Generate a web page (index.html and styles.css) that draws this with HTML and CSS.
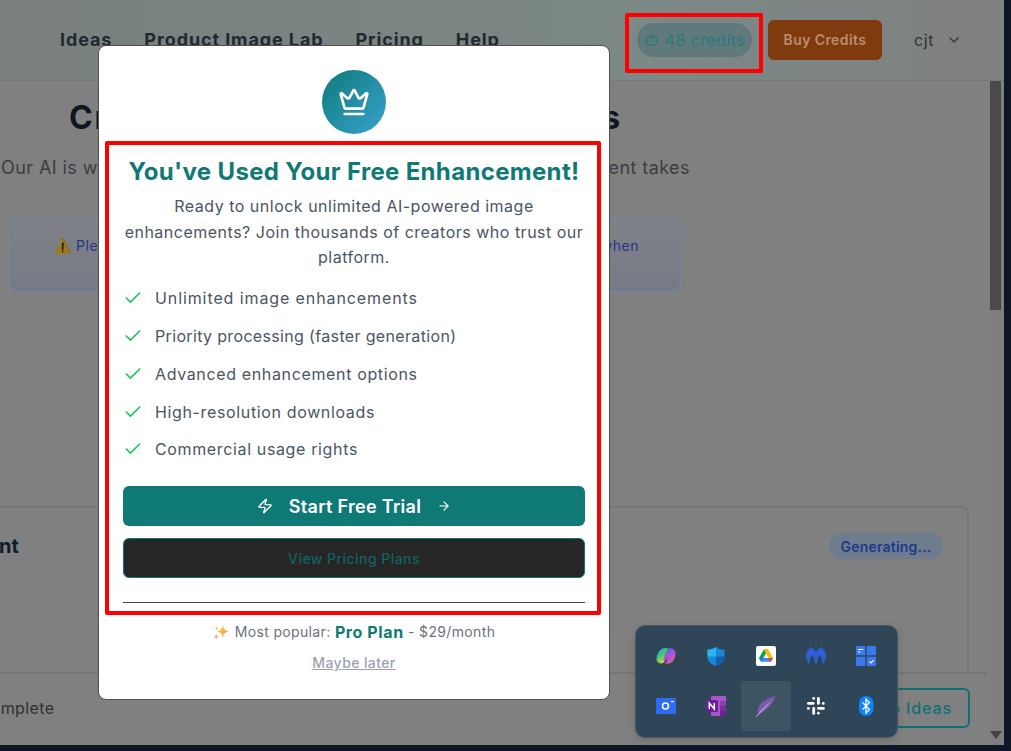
FILE: index.html
```html
<!DOCTYPE html>
<html lang="en">
<head>
<meta charset="utf-8">
<title>You've Used Your Free Enhancement</title>
<link rel="stylesheet" href="styles.css">
</head>
<body>
<div class="window">
  <header class="topbar">
    <nav class="nav">
      <a class="nav-link">Ideas</a>
      <a class="nav-link">Product Image Lab</a>
      <a class="nav-link">Pricing</a>
      <a class="nav-link">Help</a>
    </nav>
    <div class="account">
      <span class="credits">
        <svg class="credits-icon" viewBox="0 0 24 24" fill="none" stroke="currentColor" stroke-width="2" stroke-linecap="round" stroke-linejoin="round"><path d="M12 8V4H9"/><rect x="4" y="8" width="16" height="12" rx="2"/><path d="M2 14h2M20 14h2M9 13v2M15 13v2"/></svg>
        48 credits
      </span>
      <button class="buy">Buy Credits</button>
      <span class="user">cjt</span>
      <svg class="chevron" viewBox="0 0 24 24" fill="none" stroke="currentColor" stroke-width="2" stroke-linecap="round" stroke-linejoin="round"><path d="m6 9 6 6 6-6"/></svg>
    </div>
  </header>
  <div class="page">
    <main class="main">
      <h1 class="headline">Creating Your Enhanced Images</h1>
      <p class="lead">Our AI is working its magic on your product images. Each enhancement takes</p>
      <div class="notice"><span class="notice-text"><span class="warn">⚠️</span> Please keep this page open while we work. We'll let you know right away when</span></div>
      <section class="card">
        <h2 class="card-title">Enhancement</h2>
        <span class="chip">Generating...</span>
      </section>
      <footer class="footer">
        <span class="status">Generation complete</span>
        <button class="back">Back to Ideas</button>
      </footer>
    </main>
    <div class="scrollbar">
      <div class="thumb"></div>
      <div class="arrow"></div>
    </div>
  </div>

  <div class="modal-layer">
    <div class="modal">
      <div class="badge">
        <svg viewBox="0 0 24 24" fill="none" stroke="#fff" stroke-width="2" stroke-linecap="round" stroke-linejoin="round"><path d="M11.562 3.266a.5.5 0 0 1 .876 0L15.39 8.87a1 1 0 0 0 1.516.294L21.183 5.5a.5.5 0 0 1 .798.519l-2.834 10.246a1 1 0 0 1-.956.734H5.81a1 1 0 0 1-.957-.734L2.02 6.02a.5.5 0 0 1 .798-.519l4.276 3.664a1 1 0 0 0 1.516-.294z"/><path d="M5 21h14"/></svg>
      </div>
      <h2 class="modal-title">You've Used Your Free Enhancement!</h2>
      <p class="modal-copy">Ready to unlock unlimited AI-powered image enhancements? Join thousands of creators who trust our platform.</p>
      <ul class="features">
        <li class="feature feature-wide"><svg class="check" viewBox="0 0 24 24" fill="none" stroke="#22c55e" stroke-width="2" stroke-linecap="round" stroke-linejoin="round"><path d="M20 6 9 17l-5-5"/></svg>Unlimited image enhancements</li>
        <li class="feature feature-tight"><svg class="check" viewBox="0 0 24 24" fill="none" stroke="#22c55e" stroke-width="2" stroke-linecap="round" stroke-linejoin="round"><path d="M20 6 9 17l-5-5"/></svg>Priority processing (faster generation)</li>
        <li class="feature"><svg class="check" viewBox="0 0 24 24" fill="none" stroke="#22c55e" stroke-width="2" stroke-linecap="round" stroke-linejoin="round"><path d="M20 6 9 17l-5-5"/></svg>Advanced enhancement options</li>
        <li class="feature"><svg class="check" viewBox="0 0 24 24" fill="none" stroke="#22c55e" stroke-width="2" stroke-linecap="round" stroke-linejoin="round"><path d="M20 6 9 17l-5-5"/></svg>High-resolution downloads</li>
        <li class="feature"><svg class="check" viewBox="0 0 24 24" fill="none" stroke="#22c55e" stroke-width="2" stroke-linecap="round" stroke-linejoin="round"><path d="M20 6 9 17l-5-5"/></svg>Commercial usage rights</li>
      </ul>
      <button class="cta">
        <svg class="cta-icon" viewBox="0 0 24 24" fill="none" stroke="currentColor" stroke-width="2" stroke-linecap="round" stroke-linejoin="round"><path d="M4 14a1 1 0 0 1-.78-1.630l9.900-10.200a.5.5 0 0 1 .860.460l-1.920 6.020A1 1 0 0 0 13 10h7a1 1 0 0 1 .780 1.630l-9.900 10.200a.5.5 0 0 1-.860-.460l1.920-6.020A1 1 0 0 0 11 14z"/></svg>
        <span>Start Free Trial</span>
        <svg class="cta-arrow" viewBox="0 0 24 24" fill="none" stroke="currentColor" stroke-width="2" stroke-linecap="round" stroke-linejoin="round"><path d="M5 12h14M12 5l7 7-7 7"/></svg>
      </button>
      <button class="secondary">View Pricing Plans</button>
      <hr class="divider">
      <p class="popular"><svg class="sparkle" viewBox="0 0 16 16"><defs><linearGradient id="spk" x1="0" y1="0" x2="1" y2="1"><stop offset="0" stop-color="#fcd34d"/><stop offset="1" stop-color="#fb923c"/></linearGradient></defs><path d="M9.800 1c.5 3.700 1.800 5.300 6.200 6.300-4.400 1-5.700 2.600-6.200 6.700-.5-4.100-1.800-5.700-6.200-6.700 4.400-1 5.700-2.600 6.200-6.300z" fill="url(#spk)"/><path d="M3.200 9.800c.3 1.800.9 2.500 2.700 2.900-1.800.4-2.400 1.100-2.700 3-.3-1.900-.9-2.600-2.700-3 1.800-.4 2.400-1.100 2.700-2.900zM3.800 2.500c.2 1.200.6 1.600 1.800 1.900-1.200.3-1.600.7-1.800 1.900-.2-1.200-.6-1.600-1.800-1.900 1.200-.3 1.600-.7 1.800-1.900z" fill="#f9a66c"/></svg>Most popular: <strong class="plan">Pro Plan</strong> - $29/month</p>
      <a class="later">Maybe later</a>
    </div>
  </div>

  <div class="mark mark-credits"></div>
  <div class="mark mark-copy"></div>

  <div class="tray">
    <div class="tray-cell">
      <svg class="tray-icon" viewBox="0 0 20 20"><defs><linearGradient id="cpA" x1="0" y1="0" x2=".6" y2="1"><stop offset="0" stop-color="#2aa6f0"/><stop offset=".5" stop-color="#35c97a"/><stop offset="1" stop-color="#f6cf35"/></linearGradient><linearGradient id="cpB" x1=".2" y1="0" x2=".9" y2="1"><stop offset="0" stop-color="#4a6cf0"/><stop offset=".5" stop-color="#b14fe0"/><stop offset="1" stop-color="#f0705a"/></linearGradient></defs><path d="M6.500 2.500C8 1.600 10.500 1.800 12 2.500L8.800 14.500C8.200 16.500 7 17.500 5 17.500 2.300 17.500.5 15.500.5 12.800.5 8.800 3.500 4.300 6.500 2.500z" fill="url(#cpA)"/><path d="M12 2.500c3.300-.9 6 .4 7 2.700 1 2.500.5 6-1.300 8.800-1.700 2.600-4 3.800-6.700 3.700-1.200 0-2.200-.3-3.200-.8 1.500 0 2.800-.8 3.300-2.500z" fill="url(#cpB)"/><path d="M9.300 6.500h3.600l-2.300 7.500H7.200z" fill="#9a58d8"/></svg>
    </div>
    <div class="tray-cell">
      <svg class="tray-icon tray-icon-tall" viewBox="0 0 20 20"><path d="M10 .5c2 1.600 5 2.600 8.500 2.800V10c0 4.800-3.600 7.800-8.500 9.500C5.100 17.800 1.500 14.800 1.500 10V3.300C5 3.100 8 2.100 10 .5z" fill="#1a86d9"/><path d="M10 .5c-2 1.600-5 2.600-8.500 2.800V10H10z" fill="#2bb6ee"/><path d="M10 10h8.500c0 4.800-3.600 7.800-8.500 9.500z" fill="#0f5fae"/></svg>
    </div>
    <div class="tray-cell">
      <svg class="tray-icon" viewBox="0 0 20 20"><rect width="20" height="20" rx="2" fill="#fff"/><path d="M7.800 3.500h4.400l-4.900 8.500H3z" fill="#0f9d58"/><path d="M12.200 3.500 17 12h-4.300L7.800 3.500z" fill="#fbbc04"/><path d="M3 12h14l-2.200 3.800H5.200z" fill="#4285f4"/><path d="M3 12h4.300l-2.100 3.800z" fill="#1a73e8"/><path d="M12.700 12H17l-2.200 3.800z" fill="#ea4335"/></svg>
    </div>
    <div class="tray-cell">
      <svg class="tray-icon tray-icon-tall" viewBox="0 0 20 20"><path d="M5.300.5 10 5l4.700-4.500C18 2.500 20 5.700 20 9.500c0 3.300-1.600 6.300-4 8.500 .8-3.500-.2-7-2-9.500L12 12l-2 7.500L8 12 6 8.500C4.200 11 3.200 14.500 4 18c-2.400-2.200-4-5.200-4-8.500C0 5.700 2 2.500 5.300.5z" fill="#2f5fd6"/></svg>
    </div>
    <div class="tray-cell">
      <svg class="tray-icon" viewBox="0 0 20 20"><rect width="9.300" height="9.300" fill="#3a78f2"/><rect x="10.700" width="9.300" height="9.300" fill="#3a78f2"/><rect y="10.700" width="9.300" height="9.300" fill="#3a78f2"/><rect x="10.700" y="10.700" width="9.300" height="9.300" fill="#3a78f2"/><path d="M2 3h5.300v1.100H2zM2 5.400h2.600v1.100H2z" fill="#fff"/><path d="m13.500 15.500 1.500 1.400 2.500-2.800" fill="none" stroke="#fff" stroke-width="1.200"/></svg>
    </div>
    <div class="tray-cell">
      <svg class="tray-icon" viewBox="0 0 20 20"><path d="M0 2h20v16H0z" fill="#2f6bf0"/><circle cx="9.500" cy="10" r="3" fill="none" stroke="#fff" stroke-width="1.500"/><path d="M15 5h3v1.200h-3z" fill="#fff"/></svg>
    </div>
    <div class="tray-cell">
      <svg class="tray-icon" viewBox="0 0 20 20"><rect x="5" y="0" width="15" height="20" rx="1" fill="#a855c9"/><rect x="14" y="5" width="6" height="5" fill="#8b3fb0"/><rect x="14" y="10" width="6" height="5" fill="#7a2f9e"/><rect x="14" y="15" width="6" height="5" fill="#6a2290"/><rect y="4" width="12" height="12" rx="1" fill="#6b1f94"/><path d="M3.300 13v-6l5 6V7" fill="none" stroke="#fff" stroke-width="1.500"/></svg>
    </div>
    <div class="tray-cell tray-cell-active">
      <svg class="tray-icon tray-icon-large" viewBox="0 0 20 20"><path d="M19 1C13 2 5 6 3 12c-.6 2-.5 3.500 0 4.500C8 16 15 11 19 1z" fill="#7c59ab"/><path d="M.8 19.500C5 14 10 9 16 4.500 11 10.500 6 15.500 1.500 19.800z" fill="#b79ad8"/></svg>
    </div>
    <div class="tray-cell">
      <svg class="tray-icon" viewBox="0 0 20 20"><g fill="#fff"><rect x="1" y="6" width="7.500" height="2.800" rx="1.400"/><rect x="6.300" y="1" width="2.800" height="2.800" rx="1.400"/><rect x="11" y="1" width="2.800" height="7.800" rx="1.400"/><rect x="15.800" y="6" width="2.800" height="2.800" rx="1.400"/><rect x="11" y="11" width="7.800" height="2.800" rx="1.400"/><rect x="11" y="15.800" width="2.800" height="2.800" rx="1.400"/><rect x="6.300" y="11" width="2.800" height="7.800" rx="1.400"/><rect x="1" y="11" width="2.800" height="2.800" rx="1.400"/></g></svg>
    </div>
    <div class="tray-cell">
      <svg class="tray-icon" viewBox="0 0 20 20"><rect x="3" y="0" width="14.500" height="20" rx="7.200" fill="#0a84ff"/><path d="m6.500 6.500 7 7L10 17V3l3.500 3.500-7 7" fill="none" stroke="#fff" stroke-width="1.300"/></svg>
    </div>
  </div>
</div>
</body>
</html>
```
FILE: styles.css
```css
* { box-sizing: border-box; }
html, body { margin: 0; height: 100%; }
body {
  background: #0d1526;
  font-family: Inter, "Liberation Sans", sans-serif;
  overflow: hidden;
}
button { font-family: inherit; cursor: pointer; }

.window {
  position: relative;
  width: 1004px;
  height: 745px;
  display: flex;
  flex-direction: column;
  background: #808080;
  overflow: hidden;
}

/* top bar */
.topbar {
  height: 81px;
  flex: none;
  display: flex;
  align-items: center;
  padding: 0 42px 1px 60px;
  background: linear-gradient(90deg, #79807f 0%, #7b8683 50%, #7b8987 65%, #808080 100%);
  border-bottom: 1px solid #767b7a;
}
.nav { display: flex; gap: 32px; }
.nav-link {
  font-size: 18px;
  font-weight: 700;
  color: #1f2a30;
  letter-spacing: .9px;
}
.account { margin-left: auto; display: flex; align-items: center; }
.credits {
  width: 115px;
  height: 34px;
  display: flex;
  align-items: center;
  justify-content: center;
  gap: 6px;
  border-radius: 17px;
  background: #607a7c;
  color: #2b7a7c;
  font-size: 16px;
  letter-spacing: .4px;
}
.credits-icon { width: 15px; height: 15px; flex: none; }
.buy {
  margin-left: 16px;
  width: 114px;
  height: 40px;
  border: 0;
  border-radius: 6px;
  background: #7f3b0e;
  color: #b98e6e;
  font-size: 14px;
  font-weight: 600;
  letter-spacing: .4px;
}
.user { margin-left: 32px; font-size: 16px; color: #2f3438; letter-spacing: .6px; }
.chevron { width: 16px; height: 16px; margin-left: 12px; color: #2f3438; }

/* page under the dialog */
.page { flex: 1; min-height: 0; display: flex; }
.main {
  flex: none;
  width: 987px;
  display: flex;
  flex-direction: column;
  overflow: hidden;
}
.headline {
  margin: 17px 0 0 69px;
  font-size: 32px;
  line-height: 40px;
  font-weight: 700;
  color: #10161f;
  white-space: nowrap;
  letter-spacing: 1.850px;
}
.lead {
  margin: 18px 0 0 1px;
  font-size: 18px;
  line-height: 24px;
  color: #3a3d40;
  white-space: nowrap;
  letter-spacing: .42px;
}
.notice {
  margin: 38px 0 0 9px;
  width: 672px;
  height: 74px;
  flex: none;
  border: 1px solid #6f87ad;
  border-radius: 8px;
  background: linear-gradient(#7f8186, #767a85);
  padding: 17px 0 0 44px;
}
.notice-text {
  display: block;
  font-size: 14px;
  line-height: 20px;
  color: #24348a;
  white-space: nowrap;
  letter-spacing: .54px;
}
.warn { filter: brightness(.6); }
.card {
  margin: 214px 18px 0 -20px;
  flex: 1;
  min-height: 0;
  border: 2px solid #767676;
  border-bottom: 0;
  border-radius: 8px 8px 0 0;
  padding: 25px 24px 0 0;
  display: flex;
  justify-content: space-between;
  align-items: flex-start;
}
.card-title {
  margin: 0 0 0 -98px;
  font-size: 20px;
  line-height: 26px;
  font-weight: 700;
  color: #0f1c2e;
}
.chip {
  width: 114px;
  height: 26px;
  display: flex;
  align-items: center;
  justify-content: center;
  border-radius: 13px;
  background: #6e7c8e;
  color: #1e3a8a;
  font-size: 14px;
  font-weight: 600;
  letter-spacing: .2px;
}
.footer {
  flex: none;
  height: 73px;
  display: flex;
  align-items: center;
  justify-content: space-between;
  padding: 0 17px 3px 0;
  border-top: 2px solid #767676;
}
.status {
  margin-left: -111px;
  font-size: 16px;
  color: #2d3034;
  letter-spacing: .4px;
}
.back {
  width: 140px;
  height: 40px;
  padding: 0 16px 0 0;
  border: 2px solid #0f7075;
  border-radius: 6px;
  background: transparent;
  color: #0f7075;
  font-size: 16px;
  font-weight: 500;
  text-align: right;
  white-space: nowrap;
  letter-spacing: .9px;
}
.scrollbar {
  position: relative;
  flex: none;
  margin-left: 3px;
  width: 11px;
  background: #7e7e7e;
}
.thumb { height: 229px; background: #4a4a4a; }
.arrow {
  position: absolute;
  bottom: 6px;
  left: 0;
  border-left: 6px solid transparent;
  border-right: 6px solid transparent;
  border-top: 8px solid #444;
}

/* dialog */
.modal-layer {
  position: absolute;
  inset: 0;
  padding: 45px 0 0 98px;
}
.modal {
  width: 512px;
  height: 655px;
  background: #fff;
  border: 1px solid #505050;
  border-radius: 8px;
  padding: 24px 24px 0;
  display: flex;
  flex-direction: column;
  align-items: center;
}
.badge {
  width: 64px;
  height: 64px;
  flex: none;
  border-radius: 50%;
  background: linear-gradient(135deg, #0f7a7a, #38a3cc);
  display: flex;
  align-items: center;
  justify-content: center;
}
.badge svg { width: 32px; height: 32px; }
.modal-title {
  margin: 22px 0 0;
  font-size: 24px;
  line-height: 32px;
  font-weight: 700;
  color: #0f7a75;
  white-space: nowrap;
  letter-spacing: .33px;
}
.modal-copy {
  margin: 6px 0 0;
  font-size: 16px;
  line-height: 25.500px;
  color: #4b5563;
  text-align: center;
  letter-spacing: .5px;
}
.features {
  margin: 9px 0 0;
  padding: 0;
  width: 100%;
  list-style: none;
}
.feature {
  height: 37.750px;
  display: flex;
  align-items: center;
  gap: 12px;
  font-size: 16px;
  color: #4b5563;
  letter-spacing: .64px;
}
.feature-wide { letter-spacing: .9px; }
.feature-tight { letter-spacing: .34px; }
.check { width: 20px; height: 20px; flex: none; }
.cta {
  margin-top: 18px;
  width: 100%;
  height: 40px;
  flex: none;
  border: 0;
  border-radius: 6px;
  background: #0f7a75;
  color: #fff;
  display: flex;
  align-items: center;
  justify-content: center;
  gap: 16px;
  font-size: 18px;
  font-weight: 600;
  letter-spacing: .3px;
}
.cta-icon { width: 16px; height: 16px; }
.cta-arrow { width: 14px; height: 14px; }
.secondary {
  margin-top: 12px;
  width: 100%;
  height: 40px;
  flex: none;
  border: 1px solid #0f7a75;
  border-radius: 6px;
  background: #262626;
  color: #12625f;
  font-size: 14px;
  font-weight: 500;
  letter-spacing: .45px;
}
.divider {
  margin: 24px 0 0;
  width: 100%;
  height: 1px;
  flex: none;
  border: 0;
  background: #4a4a4a;
}
.popular {
  margin: 19px 0 0;
  display: flex;
  align-items: center;
  font-size: 14px;
  line-height: 20px;
  color: #6b7280;
  white-space: pre;
  letter-spacing: .35px;
}
.sparkle { width: 16px; height: 16px; margin-right: 6px; }
.plan { font-weight: 700; font-size: 16px; color: #0f7a75; letter-spacing: .6px; }
.later {
  margin-top: 11px;
  font-size: 14px;
  line-height: 20px;
  font-weight: 500;
  color: #9ca3af;
  text-decoration: underline;
  letter-spacing: .4px;
}

/* red review marks */
.mark {
  position: absolute;
  border: 4px solid #f00;
  border-radius: 2px;
  pointer-events: none;
}
.mark-credits { left: 625px; top: 13px; width: 138px; height: 60px; }
.mark-copy { left: 105px; top: 141px; width: 496px; height: 474px; }

/* system tray flyout */
.tray {
  position: absolute;
  left: 636px;
  top: 626px;
  width: 261px;
  height: 111px;
  padding: 5px;
  border-radius: 9px;
  background: #2f4659;
  box-shadow: 0 0 0 1px #4a5560, 0 2px 8px rgba(0, 0, 0, .2);
  display: grid;
  grid-template-columns: repeat(5, 50px);
  grid-auto-rows: 50px;
}
.tray-cell { display: flex; align-items: center; justify-content: center; border-radius: 4px; }
.tray-cell-active { background: #3d5563; }
.tray-icon { width: 20px; height: 20px; }
.tray-icon-large { width: 22px; height: 22px; }
.tray-icon-tall { height: 21px; }
```
